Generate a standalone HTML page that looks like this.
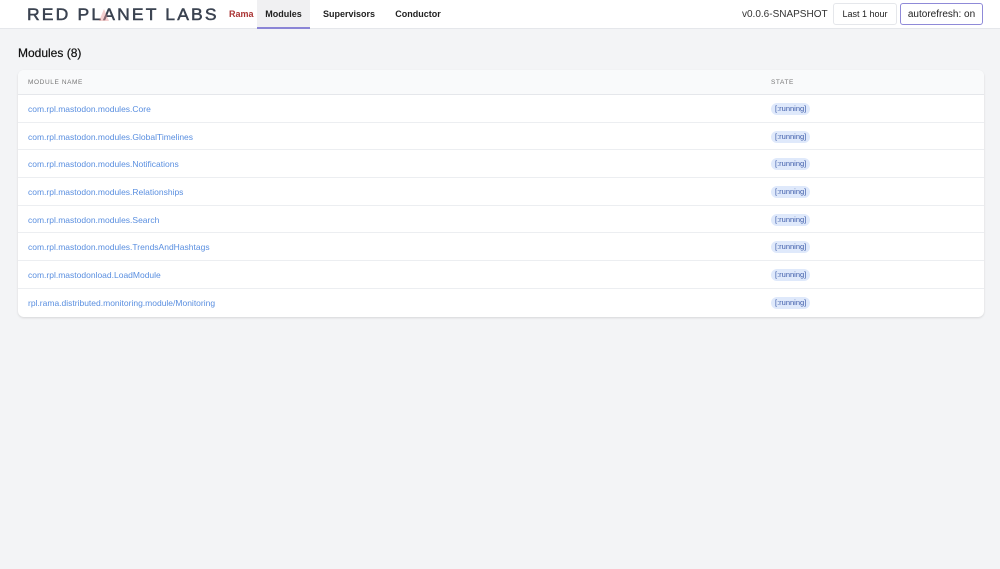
<!DOCTYPE html>
<html><head><meta charset="utf-8"><style>
*{box-sizing:border-box;margin:0;padding:0}
body{width:1000px;height:569px;background:#f3f4f6;font-family:"Liberation Sans",sans-serif;position:relative;overflow:hidden}
.hdr{position:absolute;left:0;top:0;width:1000px;height:29px;background:#fff;border-bottom:1px solid #e5e7eb}
.logo{position:absolute;left:27px;top:5px;font-size:17px;letter-spacing:2.1px;color:#3a4250;white-space:nowrap;-webkit-text-stroke:0.5px #3a4250;transform:scaleX(1.03);transform-origin:left}
.tri{position:absolute;left:99px;top:9px;width:0;height:0;border-left:5px solid transparent;border-right:5px solid transparent;border-bottom:12px solid rgba(230,150,150,.45)}
.rama{position:absolute;left:229px;top:9px;font-size:9px;font-weight:bold;color:#a33}
.tab{position:absolute;top:0;height:29px;font-size:9px;font-weight:bold;color:#222;line-height:28px;text-align:center}
.act{background:#f0f0f2;border-bottom:2px solid #8b85d6}
.ver{position:absolute;left:742px;top:9px;font-size:10px;color:#333}
.btn{position:absolute;top:3px;height:22px;border:1px solid #e5e7eb;border-radius:3px;font-size:9px;color:#222;line-height:20px;text-align:center;background:#fff}
h1{position:absolute;left:18px;top:46px;font-size:12px;font-weight:normal;color:#111;-webkit-text-stroke:0.2px #111}
.card{position:absolute;left:18px;top:70px;width:966px;height:247px;background:#fff;border-radius:6px;box-shadow:0 1px 2px rgba(0,0,0,.12);overflow:hidden}
.th{height:25px;background:#f9fafb;border-bottom:1px solid #e5e7eb;font-size:6.5px;letter-spacing:.6px;color:#777;position:relative}
.th span{position:absolute;top:9px}
.row{height:27.7px;border-bottom:1px solid #eceef1;position:relative}
.row:last-child{border-bottom:none}
.row a{position:absolute;left:10px;top:9px;font-size:8.5px;color:#5a8fe0;text-decoration:none}
.b{position:absolute;left:753px;top:8px;height:12px;padding:0 4px;background:#dfe9fb;color:#3b5aa8;border-radius:6px;font-size:7.5px;line-height:12px}
</style></head><body>
<div class="hdr">
<div class="logo">RED PLANET LABS</div><div class="tri"></div>
<div class="rama">Rama</div>
<div class="tab act" style="left:257px;width:53px">Modules</div>
<div class="tab" style="left:318px;width:62px">Supervisors</div>
<div class="tab" style="left:390px;width:56px">Conductor</div>
<div class="ver">v0.0.6-SNAPSHOT</div>
<div class="btn" style="left:833px;width:64px">Last 1 hour</div>
<div class="btn" style="left:900px;width:83px;border-color:#8f8ad8;font-size:10px;line-height:21px">autorefresh: on</div>
</div>
<h1>Modules (8)</h1>
<div class="card">
<div class="th"><span style="left:10px">MODULE NAME</span><span style="left:753px">STATE</span></div>
<div class="row"><a>com.rpl.mastodon.modules.Core</a><span class="b">[:running]</span></div>
<div class="row"><a>com.rpl.mastodon.modules.GlobalTimelines</a><span class="b">[:running]</span></div>
<div class="row"><a>com.rpl.mastodon.modules.Notifications</a><span class="b">[:running]</span></div>
<div class="row"><a>com.rpl.mastodon.modules.Relationships</a><span class="b">[:running]</span></div>
<div class="row"><a>com.rpl.mastodon.modules.Search</a><span class="b">[:running]</span></div>
<div class="row"><a>com.rpl.mastodon.modules.TrendsAndHashtags</a><span class="b">[:running]</span></div>
<div class="row"><a>com.rpl.mastodonload.LoadModule</a><span class="b">[:running]</span></div>
<div class="row"><a>rpl.rama.distributed.monitoring.module/Monitoring</a><span class="b">[:running]</span></div>
</div>
</body></html>
